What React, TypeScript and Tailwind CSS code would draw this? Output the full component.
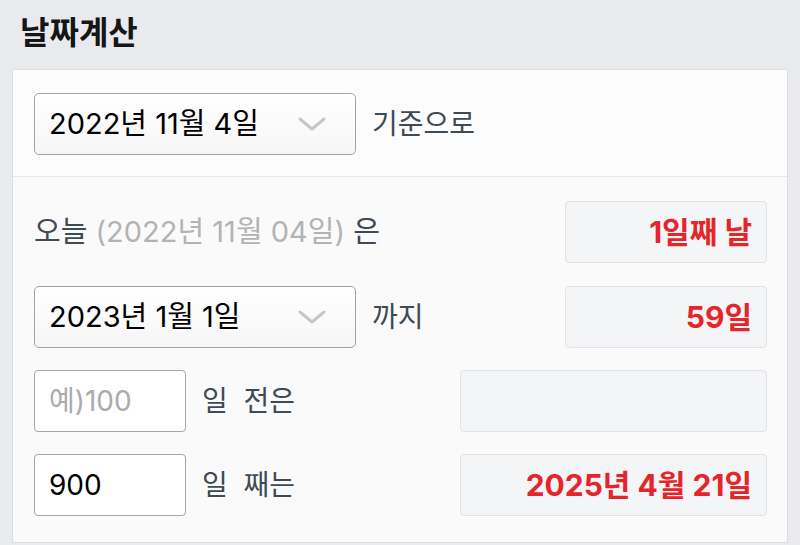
import React from "react";

const font = "font-['Inter','Noto_Sans_CJK_KR',sans-serif]";

function Chevron() {
    return (
        <svg width="28" height="14" viewBox="0 0 28 14" fill="none">
            <path
                d="M2 2 L14 12 L26 2"
                stroke="#c6c6c6"
                strokeWidth="3"
                strokeLinecap="round"
                strokeLinejoin="round"
            />
        </svg>
    );
}

function DateSelect({ label }: { label: string }) {
    return (
        <div className="w-[322px] h-[62px] shrink-0 flex items-center justify-between pl-[14px] pr-[29px] rounded-[5px] border border-[#9fa3a8] bg-gradient-to-b from-white to-[#f6f6f6] text-[29px] text-black">
            <span>{label}</span>
            <Chevron />
        </div>
    );
}

function Result({ value, wide }: { value?: string; wide?: boolean }) {
    return (
        <div
            className={`${wide ? "w-[307px]" : "w-[202px]"} h-[62px] shrink-0 flex items-center justify-end pr-[14px] rounded-[4px] border border-[#e2e3e6] bg-[#f4f5f7] text-[30px] font-bold text-[#e4262b]`}
        >
            {value}
        </div>
    );
}

function DayInput({ value, placeholder }: { value?: string; placeholder?: string }) {
    return (
        <input
            readOnly
            value={value ?? ""}
            placeholder={placeholder}
            className={`${font} w-[152px] h-[62px] shrink-0 px-[14px] rounded-[4px] border border-[#a3a6aa] bg-white text-[28px] text-black placeholder:text-[#ababab] outline-none`}
        />
    );
}

export default function App() {
    return (
        <div className={`${font} w-[800px] h-[545px] overflow-hidden bg-[#e9eaee]`}>
            <div className="h-[69px] flex items-center pl-[20px] pb-[4px]">
                <h1 className="text-[32px] font-bold text-[#161616]">날짜계산</h1>
            </div>

            <div className="mx-[12px] border border-[#dcdddf] bg-[#fcfcfc]">
                <div className="flex items-center gap-[16px] pl-[21px] pr-[20px] pt-[23px] pb-[21px] border-b border-[#e7e7e7]">
                    <DateSelect label="2022년 11월 4일" />
                    <span className="text-[28px] text-[#3e4a54]">기준으로</span>
                </div>

                <div className="flex flex-col pl-[21px] pr-[20px] pt-[24px] pb-[26px] bg-[#fafafa]">
                    <div className="flex items-center justify-between">
                        <span className="text-[29px] text-[#3e4a54]">
                            오늘 <span className="text-[#b3b3b3]">(2022년 11월 04일)</span> 은
                        </span>
                        <Result value="1일째 날" />
                    </div>

                    <div className="mt-[23px] flex items-center justify-between">
                        <div className="flex items-center gap-[16px]">
                            <DateSelect label="2023년 1월 1일" />
                            <span className="text-[28px] text-[#3e4a54]">까지</span>
                        </div>
                        <Result value="59일" />
                    </div>

                    <div className="mt-[22px] flex items-center justify-between">
                        <div className="flex items-center gap-[16px]">
                            <DayInput placeholder="예)100" />
                            <span className="text-[28px] text-[#3e4a54] whitespace-pre">일  전은</span>
                        </div>
                        <Result wide />
                    </div>

                    <div className="mt-[22px] flex items-center justify-between">
                        <div className="flex items-center gap-[16px]">
                            <DayInput value="900" />
                            <span className="text-[28px] text-[#3e4a54] whitespace-pre">일  째는</span>
                        </div>
                        <Result wide value="2025년 4월 21일" />
                    </div>
                </div>
            </div>
        </div>
    );
}
